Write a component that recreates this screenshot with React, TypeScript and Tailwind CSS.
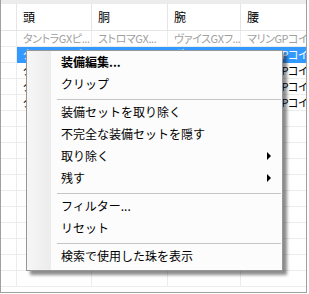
import React from "react";

const FONT = { fontFamily: '"Noto Sans CJK JP", "Noto Sans", sans-serif' };

const rowText = ["タントラGXピ...", "ストロマGX...", "ヴァイスGXフ...", "マリンGPコイ..."];
const rows: { kind: "gray" | "sel" | "black" | "empty" }[] = [
  { kind: "gray" },
  { kind: "sel" },
  { kind: "black" },
  { kind: "black" },
  { kind: "black" },
  ...Array.from({ length: 11 }, () => ({ kind: "empty" as const })),
];

function Row({ kind }: { kind: "gray" | "sel" | "black" | "empty" }) {
  const bg = kind === "sel" ? "bg-[#3399ff]" : "bg-white";
  const color =
    kind === "gray" ? "text-[#a0a0a0]" : kind === "sel" ? "text-white" : "text-black";
  const line = kind === "sel" ? "border-[#3399ff]" : "border-[#ececec]";
  return (
    <div className={`grid grid-cols-[16px_75px_76px_73px_65px] h-[16px] ${bg}`}>
      <div className="border-r border-b bg-white border-r-[#ececec] border-b-[#ececec]" />
      {[0, 1, 2, 3].map((i) => (
        <div
          key={i}
          className={`flex items-center pl-[6px] overflow-hidden whitespace-nowrap text-[11px] leading-none [font-feature-settings:'palt'] tracking-[-0.4px] ${color} border-b ${line} ${
            i < 3 ? "border-r" : ""
          }`}
        >
          {kind === "empty" ? "" : rowText[i]}
        </div>
      ))}
    </div>
  );
}

function Item({
  label,
  bold,
  arrow,
}: {
  label: string;
  bold?: boolean;
  arrow?: boolean;
}) {
  return (
    <div className="relative h-[22px] flex items-center pl-[34px] text-[12px] leading-none text-black">
      <span className={bold ? "font-bold" : ""}>{label}</span>
      {arrow && (
        <span className="absolute right-[11px] top-[7px] w-0 h-0 border-l-[4px] border-l-black border-y-[4px] border-y-transparent" />
      )}
    </div>
  );
}

function Sep() {
  return (
    <div className="h-[6px] flex flex-col justify-end pb-[1px]">
      <div className="ml-[30px] mr-[1px] h-[1px] bg-[#c5c5c5]" />
    </div>
  );
}

export default function App() {
  return (
    <div className="w-[309px] h-[294px] bg-white relative overflow-hidden" style={FONT}>
      <div className="w-[307px] h-[293px] border-l border-r border-b border-[#a0a0a0] flex flex-col bg-white">
        <div className="h-[4px] bg-[#ececec]" />
        <div className="grid grid-cols-[16px_75px_76px_73px_65px] h-[27px] border-b border-[#e5e5e5] bg-white">
          <div className="border-r border-[#e5e5e5]" />
          {["頭", "胴", "腕", "腰"].map((h, i) => (
            <div
              key={h}
              className={`flex items-center pl-[6px] text-[12px] text-black ${
                i < 3 ? "border-r border-[#e5e5e5]" : ""
              }`}
            >
              {h}
            </div>
          ))}
        </div>
        {rows.map((r, i) => (
          <Row key={i} kind={r.kind} />
        ))}
      </div>

      <div className="absolute left-[26px] top-[50px] w-[257px] h-[221px] border border-[#979797] bg-[#fcfcfc] shadow-[4px_4px_3px_rgba(0,0,0,0.45)] flex flex-col">
        <div className="absolute left-0 top-0 bottom-0 w-[24px] bg-gradient-to-r from-[#f6f6f6] to-[#ececec]" />
        <Item label="装備編集..." bold />
        <Item label="クリップ" />
        <Sep />
        <Item label="装備セットを取り除く" />
        <Item label="不完全な装備セットを隠す" />
        <Item label="取り除く" arrow />
        <Item label="残す" arrow />
        <Sep />
        <Item label="フィルター..." />
        <Item label="リセット" />
        <Sep />
        <Item label="検索で使用した珠を表示" />
      </div>
    </div>
  );
}
